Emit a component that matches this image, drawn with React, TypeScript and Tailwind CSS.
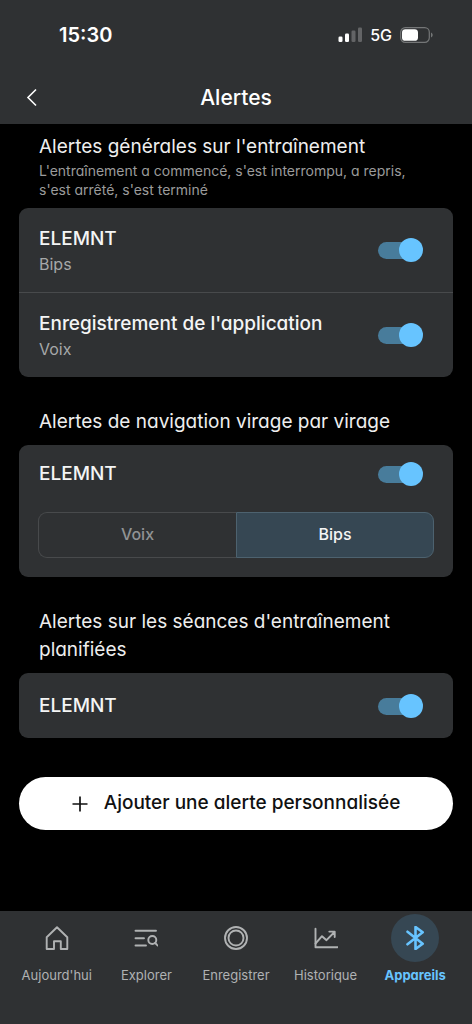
import { useState } from "react";
import type { ReactNode } from "react";
import { clsx } from "clsx";

type ToggleProps = {
  id: string;
  defaultChecked?: boolean;
};

const Toggle = ({ id, defaultChecked = true }: ToggleProps) => (
  <span className="relative flex h-6 w-[45px] shrink-0 items-center">
    <input
      id={id}
      type="checkbox"
      role="switch"
      defaultChecked={defaultChecked}
      className="peer absolute inset-0 z-10 cursor-pointer opacity-0"
    />
    <span className="h-[17px] w-10 rounded-full bg-[#5a5d60] peer-checked:bg-[#487c9b]" />
    <span className="absolute left-0 size-6 rounded-full bg-[#b5b7b9] peer-checked:right-0 peer-checked:left-auto peer-checked:bg-[#67c4ff]" />
  </span>
);

type AlertRowProps = {
  id: string;
  label: string;
  detail?: string;
};

const AlertRow = ({ id, label, detail }: AlertRowProps) => (
  <div className="flex items-center justify-between gap-4 pr-[30px] pl-5">
    <label htmlFor={id} className="flex cursor-pointer flex-col">
      <span className="text-[19px] leading-7 font-medium text-[#f4f5f5]">
        {label}
      </span>
      {detail && (
        <span className="text-base leading-[22px] text-[#a6a8a9]">
          {detail}
        </span>
      )}
    </label>
    <Toggle id={id} />
  </div>
);

type SectionProps = {
  title: string;
  description?: string;
  children: ReactNode;
};

const Section = ({ title, description, children }: SectionProps) => (
  <section className="flex flex-col gap-[9px]">
    <div className="px-5">
      <h2 className="text-[19px] leading-7 text-[#eeeeee]">{title}</h2>
      {description && (
        <p className="text-sm leading-[19px] text-[#9b9b9b]">{description}</p>
      )}
    </div>
    <div className="overflow-hidden rounded-[9px] bg-[#2f3133]">{children}</div>
  </section>
);

const StatusBar = () => (
  <div className="flex items-center justify-between pt-[21px] pr-[39px] pl-[59px] text-white">
    <span className="text-xl leading-7 font-semibold">15:30</span>
    <div className="flex items-center gap-2">
      <svg width="24" height="16" viewBox="0 0 24 16" fill="currentColor">
        <rect x="0.5" y="9.5" width="4" height="5.5" rx="1.3" />
        <rect x="7" y="6.5" width="4" height="8.5" rx="1.3" />
        <rect x="13.5" y="3.5" width="4" height="11.5" rx="1.3" opacity="0.25" />
        <rect x="20" y="0.5" width="4" height="14.5" rx="1.3" opacity="0.25" />
      </svg>
      <span className="text-base leading-7 font-medium">5G</span>
      <svg width="33" height="16" viewBox="0 0 33 16" fill="none">
        <rect
          x="0.7"
          y="0.7"
          width="28.6"
          height="14.6"
          rx="4.6"
          stroke="#747677"
          strokeWidth="1.2"
        />
        <rect x="2" y="2.2" width="16" height="11.6" rx="3.4" fill="white" />
        <path d="M31 5.5v5c1-.4 1.7-1.4 1.7-2.5S32 5.9 31 5.5Z" fill="#747677" />
      </svg>
    </div>
  </div>
);

const HomeIcon = () => (
  <path d="M1.7 11.2 12 1.3l10.3 9.9V23h-6.5v-7.8H9V23H1.7Z" />
);

const ExploreIcon = () => (
  <>
    <path d="M1.5 4.8H22M1.5 12.2H10M1.5 19.5H12" />
    <circle cx="18.3" cy="14" r="4" />
    <path d="m21.2 17 2.6 2.6" />
  </>
);

const RecordIcon = () => (
  <>
    <circle cx="12" cy="12" r="11" />
    <circle cx="12" cy="12" r="7.5" />
  </>
);

const HistoryIcon = () => (
  <>
    <path d="M1.5 2.7v18.5h22" />
    <path d="M1.5 17.5 8 10.2l4.5 4 8-8.2M15.3 5.6h5.4V11" />
  </>
);

const BluetoothIcon = () => (
  <path
    strokeWidth="2.6"
    d="m4.5 5.7 15.2 12.1-7.2 5.2V1l7.2 5.2L4.5 18.3"
  />
);

const navItems = [
  { label: "Aujourd'hui", Icon: HomeIcon },
  { label: "Explorer", Icon: ExploreIcon },
  { label: "Enregistrer", Icon: RecordIcon },
  { label: "Historique", Icon: HistoryIcon },
  { label: "Appareils", Icon: BluetoothIcon, active: true },
];

const soundOptions = ["Voix", "Bips"];

const App = () => {
  const [sound, setSound] = useState("Bips");

  return (
    <div className="flex min-h-screen flex-col bg-black font-['Inter',sans-serif] [font-feature-settings:'cv11']">
      <header className="bg-[#2f3133]">
        <StatusBar />
        <div className="grid h-[75px] grid-cols-[1fr_auto_1fr] items-center px-5 pt-[22px] text-white">
          <button type="button" aria-label="Retour" className="w-6 cursor-pointer">
            <svg
              width="24"
              height="20"
              viewBox="0 0 24 20"
              fill="none"
              stroke="currentColor"
              strokeWidth="1.6"
            >
              <path d="m16 1.5-8 8 8 8" />
            </svg>
          </button>
          <h1 className="text-[21px] leading-7 font-medium">Alertes</h1>
        </div>
      </header>

      <main className="flex flex-1 flex-col gap-[31px] px-[19px] pt-[9px] pb-8">
        <Section
          title="Alertes générales sur l'entraînement"
          description="L'entraînement a commencé, s'est interrompu, a repris, s'est arrêté, s'est terminé"
        >
          <div className="divide-y divide-[#484a4c]">
            <div className="py-[17px]">
              <AlertRow id="general-elemnt" label="ELEMNT" detail="Bips" />
            </div>
            <div className="py-[17px]">
              <AlertRow
                id="general-app"
                label="Enregistrement de l'application"
                detail="Voix"
              />
            </div>
          </div>
        </Section>

        <Section title="Alertes de navigation virage par virage">
          <div className="pt-[15px] pb-[19px]">
            <AlertRow id="navigation-elemnt" label="ELEMNT" />
            <div className="mx-[19px] mt-6 grid h-[46px] grid-cols-2">
              {soundOptions.map((option) => (
                <button
                  key={option}
                  type="button"
                  aria-pressed={sound === option}
                  onClick={() => setSound(option)}
                  className={clsx(
                    "cursor-pointer border pb-0.5 text-base font-medium first:rounded-l-[9px] last:rounded-r-[9px]",
                    sound === option
                      ? "border-[#4d626f] bg-[#364753] text-[#f4f5f5]"
                      : "border-[#484a4c] text-[#919394] first:border-r-0 last:border-l-0"
                  )}
                >
                  {option}
                </button>
              ))}
            </div>
          </div>
        </Section>

        <Section title="Alertes sur les séances d'entraînement planifiées">
          <div className="pt-[19px] pb-[18px]">
            <AlertRow id="planned-elemnt" label="ELEMNT" />
          </div>
        </Section>

        <button
          type="button"
          className="mt-2 flex h-[53px] cursor-pointer items-center justify-center gap-4 rounded-full bg-white text-[19px] font-medium text-[#111111]"
        >
          <svg
            width="16"
            height="16"
            viewBox="0 0 16 16"
            stroke="currentColor"
            strokeWidth="1.7"
          >
            <path d="M8 .5v15M.5 8h15" />
          </svg>
          Ajouter une alerte personnalisée
        </button>
      </main>

      <nav className="sticky bottom-0 grid h-[113px] grid-cols-5 bg-[#2f3133] px-3 pt-[3px]">
        {navItems.map(({ label, Icon, active }) => (
          <a
            key={label}
            href="#"
            aria-current={active ? "page" : undefined}
            className={clsx(
              "flex flex-col items-center gap-[3px] text-[13px] leading-5",
              active ? "font-bold text-[#67c4ff]" : "text-[#b0b2b3]"
            )}
          >
            <span
              className={clsx(
                "flex size-12 items-center justify-center rounded-full",
                active && "bg-[#364753]"
              )}
            >
              <svg
                width="24"
                height="24"
                viewBox="0 0 24 24"
                fill="none"
                stroke="currentColor"
                strokeWidth="1.9"
                strokeLinecap="round"
                strokeLinejoin="round"
              >
                <Icon />
              </svg>
            </span>
            {label}
          </a>
        ))}
      </nav>
    </div>
  );
};

export default App;
